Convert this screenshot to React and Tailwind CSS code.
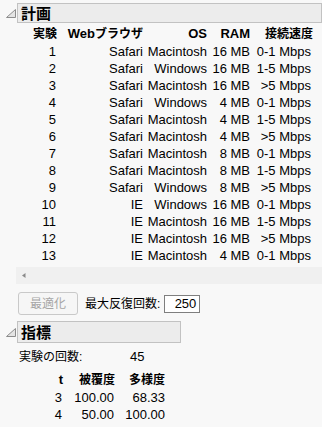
import React from 'react';

const rows = [
    [1, 'Safari', 'Macintosh', '16 MB', '0-1 Mbps'],
    [2, 'Safari', 'Windows', '16 MB', '1-5 Mbps'],
    [3, 'Safari', 'Macintosh', '16 MB', '>5 Mbps'],
    [4, 'Safari', 'Windows', '4 MB', '0-1 Mbps'],
    [5, 'Safari', 'Macintosh', '4 MB', '1-5 Mbps'],
    [6, 'Safari', 'Macintosh', '4 MB', '>5 Mbps'],
    [7, 'Safari', 'Macintosh', '8 MB', '0-1 Mbps'],
    [8, 'Safari', 'Macintosh', '8 MB', '1-5 Mbps'],
    [9, 'Safari', 'Windows', '8 MB', '>5 Mbps'],
    [10, 'IE', 'Windows', '16 MB', '0-1 Mbps'],
    [11, 'IE', 'Macintosh', '16 MB', '1-5 Mbps'],
    [12, 'IE', 'Macintosh', '16 MB', '>5 Mbps'],
    [13, 'IE', 'Macintosh', '4 MB', '0-1 Mbps'],
];

const metrics = [
    ['3', '100.00', '68.33'],
    ['4', '50.00', '100.00'],
];

// small disclosure triangle used by the outline headers
const Disclosure = () => (
    <div className="w-[17px] flex justify-end pr-[1px]">
        <svg width="10" height="9" viewBox="0 0 10 9">
            <polygon points="0.5,8.5 9.5,8.5 9.5,0.5" fill="#e4e4e4" stroke="#8c8c8c" strokeWidth="1" />
        </svg>
    </div>
);

const SectionHeader = ({ title, className }) => (
    <div className="flex items-center">
        <Disclosure />
        <div className={`h-[20px] border border-[#c2c2c2] bg-[#ececec] flex items-center pl-[3px] ${className}`}>
            <span className="text-[15px] font-bold leading-none">{title}</span>
        </div>
    </div>
);

const App = () => {
    return (
        <div className="w-[322px] h-[427px] overflow-hidden bg-[#f8f8f8] text-black text-[13px] font-['Liberation_Sans','Noto_Sans_CJK_JP',sans-serif]">
            <div className="pt-[3px]">
                <SectionHeader title="計画" className="flex-1" />
            </div>

            {/* design table */}
            <div className="mt-[2px]">
                <div className="grid grid-cols-[57px_86px_64px_43px_63px] h-[18px] leading-[18px] font-bold text-right">
                    <div className="text-[12px]">実験</div>
                    <div>Web<span className="text-[12px]">ブラウザ</span></div>
                    <div>OS</div>
                    <div>RAM</div>
                    <div className="text-[12px]">接続速度</div>
                </div>
                {rows.map((r) => (
                    <div key={r[0]} className="grid grid-cols-[56px_87px_64px_43px_61px] h-[17px] leading-[17px] text-right">
                        <div>{r[0]}</div>
                        <div>{r[1]}</div>
                        <div>{r[2]}</div>
                        <div>{r[3]}</div>
                        <div>{r[4]}</div>
                    </div>
                ))}
            </div>

            {/* horizontal scroll strip */}
            <div className="mt-[3px] ml-[16px] h-[17px] bg-[#f0f0f0] flex items-center pl-[6px]">
                <svg width="4" height="5" viewBox="0 0 4 5">
                    <polygon points="0,2.5 3.5,0 3.5,5" fill="#8a8a8a" />
                </svg>
            </div>

            {/* optimize controls */}
            <div className="mt-[8px] ml-[18px] flex items-center h-[23px]">
                <button disabled className="w-[60px] h-[23px] rounded-[3px] border border-[#c9c9c9] bg-[#f6f6f6] text-[12px] text-[#a6a6a6]">
                    最適化
                </button>
                <span className="ml-[7px] text-[12px]">最大反復回数:</span>
                <div className="ml-[4px] w-[36px] h-[18px] border border-[#7f7f7f] bg-white text-right pr-[3px] leading-[16px]">
                    250
                </div>
            </div>

            <div className="mt-[6px]">
                <SectionHeader title="指標" className="w-[164px] h-[22px]" />
            </div>

            <div className="mt-[5px] ml-[19px] flex h-[18px] leading-[18px]">
                <span className="w-[111px] text-[12px]">実験の回数:</span>
                <span>45</span>
            </div>

            <div className="mt-[5px]">
                <div className="grid grid-cols-[63px_52px_50px] h-[18px] leading-[18px] font-bold text-right">
                    <div>t</div>
                    <div className="text-[12px]">被覆度</div>
                    <div className="text-[12px]">多様度</div>
                </div>
                {metrics.map((m) => (
                    <div key={m[0]} className="grid grid-cols-[62px_52px_51px] h-[17px] leading-[17px] text-right">
                        <div>{m[0]}</div>
                        <div>{m[1]}</div>
                        <div>{m[2]}</div>
                    </div>
                ))}
            </div>
        </div>
    );
};

export default App;
